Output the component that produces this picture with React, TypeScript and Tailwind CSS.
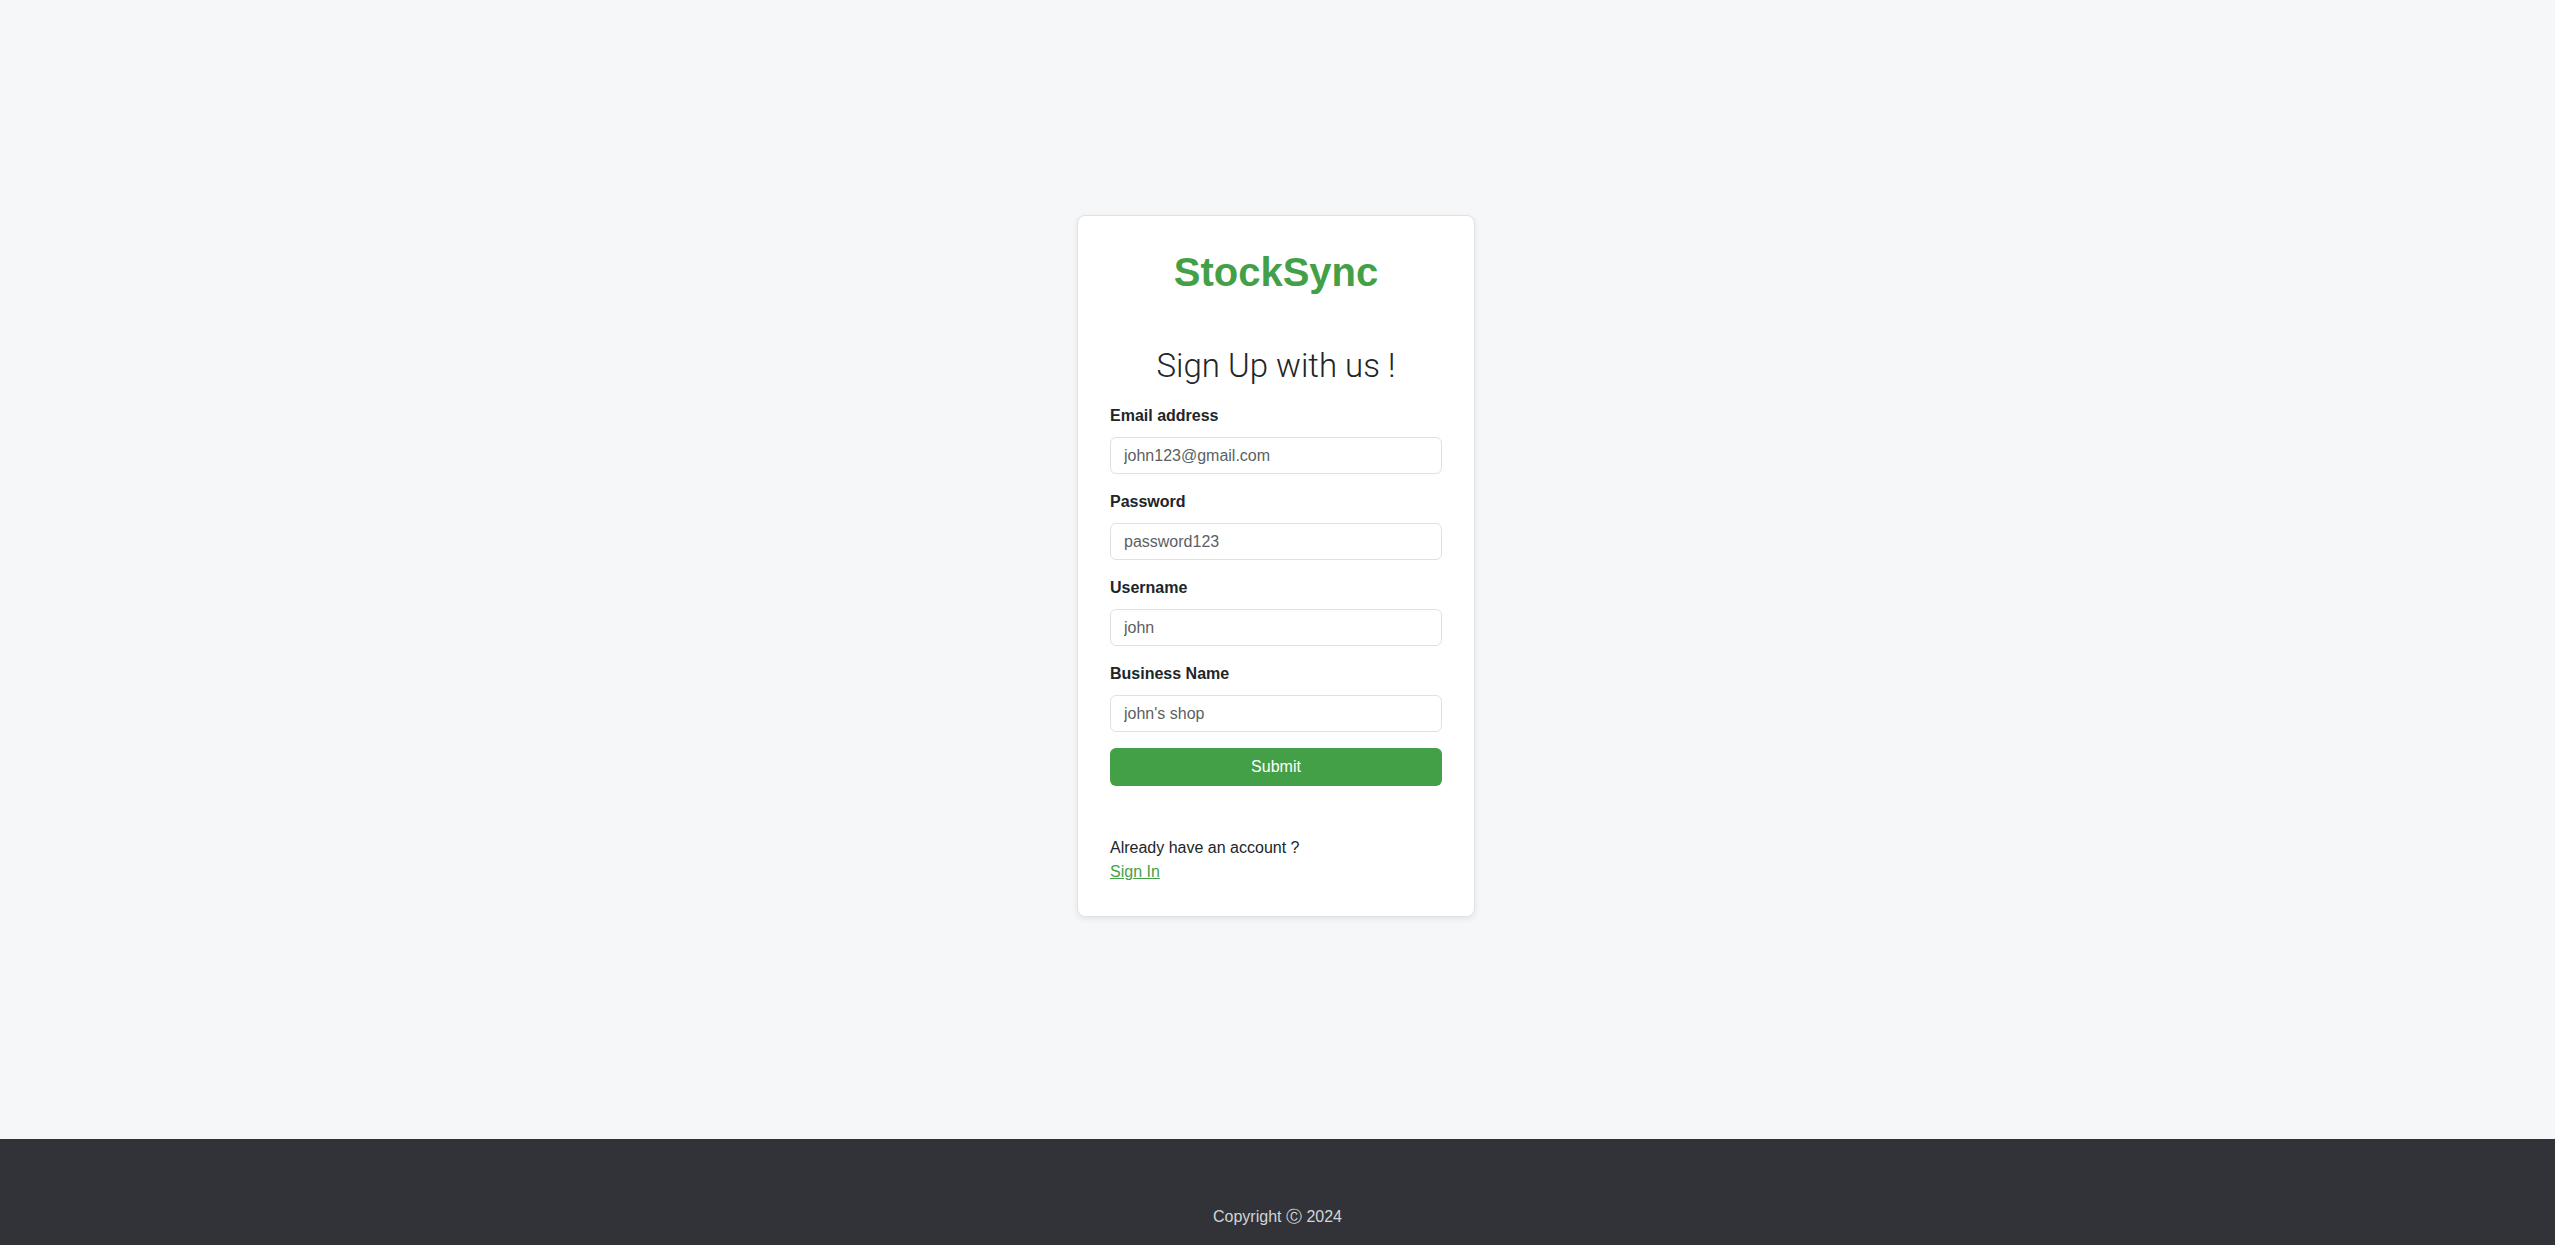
import React from "react";

const fields = [
  { label: "Email address", placeholder: "john123@gmail.com", type: "email" },
  { label: "Password", placeholder: "password123", type: "password" },
  { label: "Username", placeholder: "john", type: "text" },
  { label: "Business Name", placeholder: "john's shop", type: "text" },
];

const App = () => {
  return (
    <div className="min-h-screen flex flex-col bg-[#f6f7f9] font-['Liberation_Sans',Arial,sans-serif] text-[#212529]">
      {/* Formulir pendaftaran */}
      <main className="flex-1 flex items-center justify-center pb-[7px] pr-[3px]">
        <div className="w-[398px] bg-white border border-[#dee2e6] rounded-lg shadow-[0_2px_6px_rgba(0,0,0,0.08)] px-8 py-8">
          <h1 className="text-center text-[40px] leading-[48px] font-bold text-[#43a047]">
            StockSync
          </h1>
          <h2 className="mt-[51px] text-center text-[33px] leading-[38px] font-light font-['Roboto',sans-serif] text-[#212529]">
            Sign Up with us !
          </h2>
          <form className="mt-[19px]" onSubmit={(e) => e.preventDefault()}>
            {fields.map((f) => (
              <div key={f.label} className="mb-4">
                <label className="block text-base leading-6 font-bold mb-[9px]">{f.label}</label>
                <input
                  type="text"
                  placeholder={f.placeholder}
                  className="block w-full h-[37px] px-[13px] text-base border border-[#dee2e6] rounded-md bg-white outline-none placeholder:text-[#5c5f63]"
                />
              </div>
            ))}
            <button
              type="submit"
              className="w-full h-[38px] rounded-md bg-[#43a047] text-white text-base leading-6"
            >
              Submit
            </button>
          </form>
          <div className="mt-[50px] text-base leading-6">
            <p>Already have an account ?</p>
            <a href="#" className="text-[#43a047] underline">
              Sign In
            </a>
          </div>
        </div>
      </main>

      {/* Footer */}
      <footer className="h-[106px] bg-[#313338] pt-[66px] text-center text-base leading-6 text-[#d4d5d6]">
        Copyright Ⓒ 2024
      </footer>
    </div>
  );
};

export default App;
